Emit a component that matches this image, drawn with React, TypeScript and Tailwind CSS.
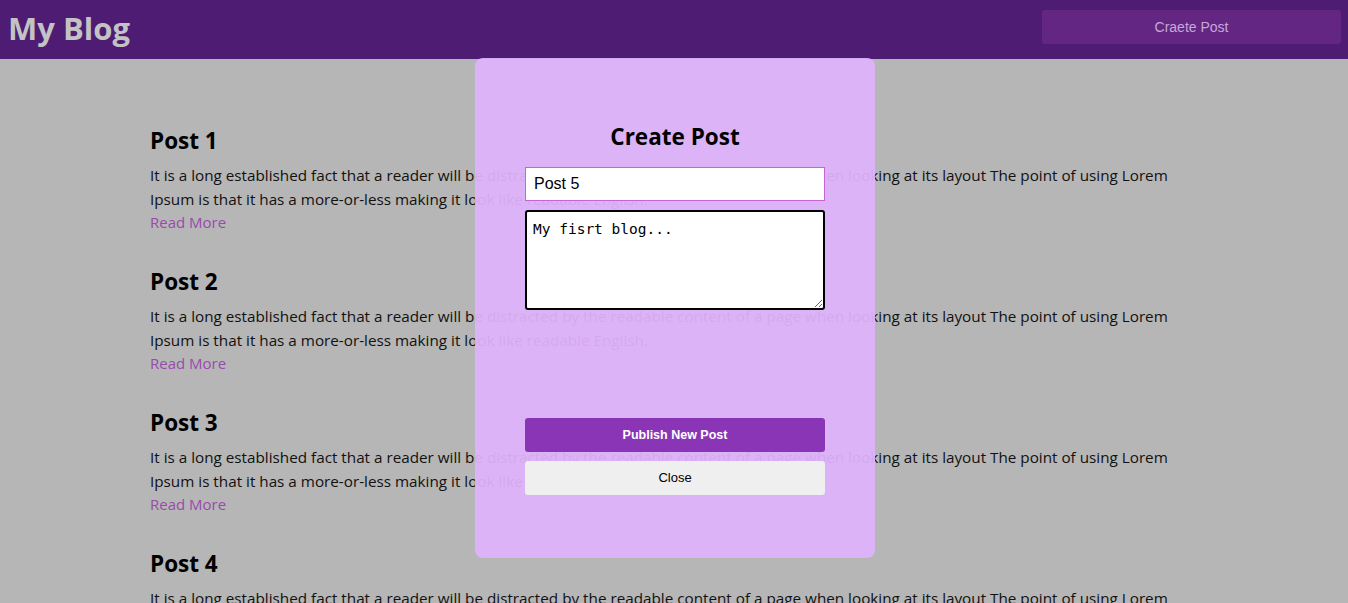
import { useState } from 'react';

const LOREM =
  'It is a long established fact that a reader will be distracted by the readable content of a page when looking at its layout The point of using Lorem Ipsum is that it has a more-or-less making it look like readable English.';

const POSTS = [1, 2, 3, 4].map((n) => ({ id: n, title: `Post ${n}`, body: LOREM }));

function Header() {
  return (
    <header className="flex h-[59px] items-start justify-between bg-[#4f1c74]">
      <h1 className="ml-2 mt-[8px] text-[31px] font-bold leading-[40px] text-[#c3c3c3]">My Blog</h1>
      <button
        type="button"
        className="mr-[7px] mt-[10px] h-[34px] w-[299px] rounded-[3px] bg-[#632683] font-['Liberation_Sans',Arial,sans-serif] text-[14px] text-[#c7a8da]"
      >
        Craete Post
      </button>
    </header>
  );
}

function PostList() {
  return (
    <main className="mx-auto flex max-w-[1048px] flex-col gap-[32px] pt-[66px]">
      {POSTS.map((post) => (
        <article key={post.id}>
          <h2 className="text-[22.5px] font-bold leading-[32px] text-black">{post.title}</h2>
          <p className="mt-[6px] text-[15.25px] leading-[24px] text-[#111]">{post.body}</p>
          <a href="#" className="block text-[15px] leading-[23px] text-[#9a4aae]">
            Read More
          </a>
        </article>
      ))}
    </main>
  );
}

function CreatePostModal() {
  const [title, setTitle] = useState('Post 5');
  const [body, setBody] = useState('');

  return (
    <div className="absolute left-[475px] top-[58px] flex h-[500px] w-[400px] flex-col items-center rounded-[8px] bg-[#dfb3fb]/[0.94] pt-[64px]">
      <h2 className="text-[22.5px] font-bold leading-[30px] text-black">Create Post</h2>
      <input
        value={title}
        onChange={(e) => setTitle(e.target.value)}
        className="mt-[15px] h-[34px] w-[300px] border border-[#c466d4] bg-white px-2 font-['Liberation_Sans',Arial,sans-serif] text-[16px] text-black outline-none"
      />
      <textarea
        value={body}
        onChange={(e) => setBody(e.target.value)}
        placeholder="My fisrt blog..."
        className="mt-[9px] h-[100px] w-[300px] resize rounded-[3px] border-2 border-black bg-white px-[6px] py-[9px] font-['DejaVu_Sans_Mono',monospace] text-[14.5px] leading-[17px] text-black outline-none placeholder:text-black"
      />
      <button
        type="button"
        className="mt-[108px] h-[34px] w-[300px] rounded-[3px] bg-[#8a35b5] font-['Liberation_Sans',Arial,sans-serif] text-[12.5px] font-bold text-white"
      >
        Publish New Post
      </button>
      <button
        type="button"
        className="mt-[9px] h-[34px] w-[300px] rounded-[3px] bg-[#efefef] font-['Liberation_Sans',Arial,sans-serif] text-[13px] text-black"
      >
        Close
      </button>
    </div>
  );
}

export default function App() {
  return (
    <div className="relative h-[603px] overflow-hidden bg-[#b6b6b6] font-['Open_Sans',sans-serif]">
      <Header />
      <PostList />
      <CreatePostModal />
    </div>
  );
}
